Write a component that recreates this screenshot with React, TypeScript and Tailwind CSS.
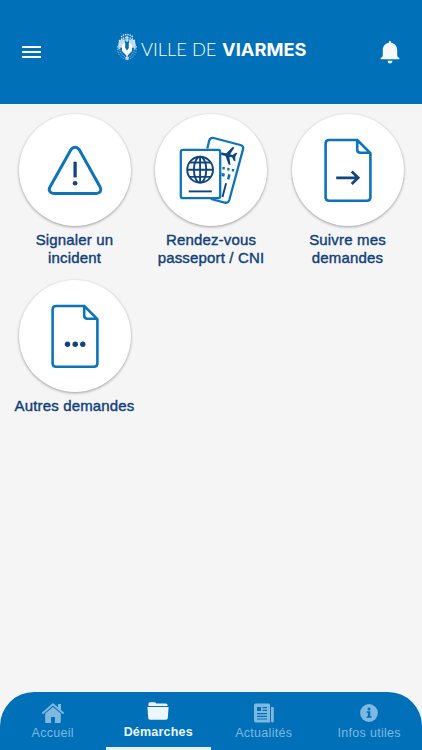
import type { ReactNode } from "react";

const BLUE = "#0e74b9";
const NAVY = "#10457f";

function WarningIcon() {
  return (
    <svg viewBox="0 0 112 112" className="size-full" fill="none">
      <path
        d="M52 35.6 C54 32.6 58.2 32.6 60.2 35.6 L81.1 73.1 C83 76.3 81 79.5 77.3 79.5 H34.8 C31.1 79.5 29.1 76.3 31 73.1 Z"
        stroke={BLUE}
        strokeWidth="3"
      />
      <path d="M56.1 47.7 V63.4" stroke={NAVY} strokeWidth="3.3" />
      <circle cx="56.1" cy="69.3" r="2.3" fill={NAVY} />
    </svg>
  );
}

function PassportIcon() {
  return (
    <svg viewBox="0 0 112 112" className="size-full" fill="none">
      <path
        d="M52.3 34.5 L54.2 26.6 Q55.2 23.2 58.6 24 L85.4 31 Q88.9 32 88 35.4 L74.3 86 Q73.2 89.4 69.8 88.6 L56 85"
        stroke={BLUE}
        strokeWidth="2.3"
      />
      <g transform="translate(73 41.2) rotate(-77)" fill={NAVY}>
        <path d="M-1.2 -6.4 Q0 -8.4 1.2 -6.4 L1.4 -2.2 L9 2.6 V4.6 L1.5 1.8 L1.1 4.4 L4.2 7 V8.6 L0 7.4 L-4.2 8.6 V7 L-1.1 4.4 L-1.5 1.8 L-9 4.6 V2.6 L-1.4 -2.2 Z" />
      </g>
      <g fill={BLUE}>
        <rect x="67.4" y="52.9" width="2.4" height="2.6" />
        <rect x="72.2" y="53.9" width="2.4" height="2.6" />
        <rect x="76.8" y="54.9" width="2.4" height="2.6" />
        <path d="M66.5 58.8 L70 59.8 L69.2 62.7 L66.5 62 Z" />
        <path d="M73.2 60 L75.7 60.7 L74.4 65.8 L71.9 65.1 Z" />
      </g>
      <path d="M71.1 69.2 L67.5 83" stroke={NAVY} strokeWidth="1.9" />
      <rect x="25.8" y="35.8" width="39.4" height="48.4" rx="2.2" fill="white" stroke={BLUE} strokeWidth="2.3" />
      <g stroke={NAVY} strokeWidth="1.9">
        <circle cx="45.1" cy="55.7" r="12.9" />
        <ellipse cx="45.1" cy="55.7" rx="6.2" ry="12.9" />
        <path d="M45.1 42.8 V68.6 M32.2 55.7 H58 M34.6 48.5 H55.6 M34.6 62.9 H55.6" />
        <path d="M33.7 77.4 H56.8" />
      </g>
    </svg>
  );
}

function DocumentIcon({ children }: { children: ReactNode }) {
  return (
    <svg viewBox="0 0 112 112" className="size-full" fill="none">
      <path
        d="M65.2 26 H37.2 Q33.6 26 33.6 29.6 V83.2 Q33.6 86.8 37.2 86.8 H74.8 Q78.4 86.8 78.4 83.2 V39.2 L65.2 26 V35.5 Q65.2 38.8 68.5 38.8 H78.2"
        stroke={BLUE}
        strokeWidth="2.6"
        strokeLinejoin="round"
      />
      {children}
    </svg>
  );
}

function Tile({ label, children }: { label: ReactNode; children: ReactNode }) {
  return (
    <button className="flex flex-col items-center gap-[5px]">
      <span className="block size-28 rounded-full bg-white shadow-[0_1px_3px_rgba(0,0,0,0.36)]">{children}</span>
      <span className="whitespace-nowrap text-center text-[15px] leading-[18px] tracking-[0.16px] text-[#10407a] [-webkit-text-stroke:0.4px_#10407a]">
        {label}
      </span>
    </button>
  );
}

function Crest() {
  return (
    <svg viewBox="0 0 24 30" className="h-[30px] w-6" fill="none" stroke="white">
      <path d="M3 13 Q1 23 12 27 Q23 23 21 13" strokeWidth="1" strokeDasharray="1.4 1.3" opacity=".55" />
      <path d="M5 11 Q3 21 12 25 Q21 21 19 11" strokeWidth="1.3" strokeDasharray="1 1" opacity=".5" />
      <path d="M6 4 Q12 -1 18 4 M4 8 Q12 1 20 8" strokeWidth="1.5" strokeDasharray="1.4 .9" opacity=".85" />
      <path d="M4 8 L8 6 L10 8 V12 L7 15 L3 13 Z M20 8 L16 6 L14 8 V12 L17 15 L21 13 Z" fill="white" stroke="none" opacity=".75" />
      <path d="M2 13 L6 14 L4 17 Z M22 13 L18 14 L20 17 Z" fill="white" stroke="none" opacity=".6" />
      <path
        fillRule="evenodd"
        d="M7 12 L9 10 H15 L17 12 V18 L14 21 L12 23.5 L10 21 L7 18 Z M10.2 10 V15 L12 17.5 L13.8 15 V10 Z"
        fill="white"
        stroke="none"
      />
      <path d="M9 7 H15 M12 3 V9 M12 23 V27 M10 25 H14" strokeWidth="1.2" opacity=".9" />
    </svg>
  );
}

function Tab({ label, active, children }: { label: string; active?: boolean; children: ReactNode }) {
  return (
    <button
      className={
        active
          ? "flex h-full flex-col items-center border-b-[3.5px] border-[#e5f1fa] pt-[8px] text-[#edf6fc]"
          : "flex h-full flex-col items-center pt-[10px] text-[#7fb9e0]"
      }
    >
      <span className="flex h-[22px] items-center">{children}</span>
      <span
        className={
          active
            ? "mt-px whitespace-nowrap text-[12.5px] font-bold leading-[18px] tracking-[0.2px]"
            : "whitespace-nowrap text-[12.5px] leading-[18px] tracking-[0.3px]"
        }
      >
        {label}
      </span>
    </button>
  );
}

export default function App() {
  return (
    <div className="flex h-[750px] w-[422px] flex-col overflow-hidden bg-[#f5f5f5] font-['Liberation_Sans',Arial,sans-serif]">
      <header className="flex h-[104px] shrink-0 items-center justify-between bg-[#0070b9] pl-[22px] pr-[22px]">
        <button aria-label="Menu" className="flex w-[19px] flex-col gap-[3px]">
          <span className="h-[2.3px] bg-white" />
          <span className="h-[2.3px] bg-white" />
          <span className="h-[2.3px] bg-white" />
        </button>
        <div className="flex items-center gap-[2px] pb-2 pl-px">
          <Crest />
          <svg viewBox="0 0 166 24" className="h-6 w-[166px]" fill="white" fontSize="18">
            <text x="0" y="19.7" fontFamily="Lato, sans-serif" fontWeight="300" textLength="75.5" lengthAdjust="spacingAndGlyphs">VILLE DE</text>
            <text x="81" y="19.7" fontFamily="Inter, sans-serif" fontWeight="700" textLength="84.5" lengthAdjust="spacingAndGlyphs">VIARMES</text>
          </svg>
        </div>
        <svg viewBox="0 0 20 24" className="h-6 w-5" fill="#f5f9fc">
          <path d="M9 1.8 Q10 -.4 11 1.8 V2.7 C15.5 3.4 17.2 6.5 17.2 10.5 V15.5 Q17.5 17.4 19 17.7 Q20 18.8 19 19.3 H1 Q0 18.8 1 17.7 Q2.5 17.4 2.8 15.5 V10.5 C2.8 6.5 4.5 3.4 9 2.7 Z" />
          <path d="M7.4 20.7 H12.6 Q12 23.6 10 23.6 Q8 23.6 7.4 20.7 Z" />
        </svg>
      </header>

      <main className="grid flex-1 grid-cols-3 content-start gap-y-[13px] px-[6.25px] pt-[9.5px]">
        <Tile label={<>Signaler un<br />incident</>}><WarningIcon /></Tile>
        <Tile label={<>Rendez-vous<br />passeport / CNI</>}><PassportIcon /></Tile>
        <Tile label={<>Suivre mes<br />demandes</>}>
          <DocumentIcon>
            <path d="M44.2 63.8 H66 M59.7 57.6 L66.2 63.8 L59.7 70" stroke={NAVY} strokeWidth="2.7" />
          </DocumentIcon>
        </Tile>
        <Tile label="Autres demandes">
          <DocumentIcon>
            <g fill={NAVY}>
              <circle cx="48.5" cy="64.3" r="2.7" />
              <circle cx="56.2" cy="64.3" r="2.7" />
              <circle cx="63.8" cy="64.3" r="2.7" />
            </g>
          </DocumentIcon>
        </Tile>
      </main>

      <nav className="grid h-[58.5px] shrink-0 grid-cols-4 rounded-t-[34px] bg-[#0070b9]">
        <Tab label="Accueil">
          <svg viewBox="0 0 22 20" className="h-5 w-[22px]" fill="currentColor">
            <path d="M3.2 10.6 L11 4 L18.8 10.6 V19 Q18.8 20 17.8 20 H13 V14 H9 V20 H4.2 Q3.2 20 3.2 19 Z" />
            <path d="M1 10 L11 1.3 L21 10" fill="none" stroke="currentColor" strokeWidth="1.9" strokeLinecap="round" />
            <path d="M16 1 H19 V8 L16 5.4 Z" />
          </svg>
        </Tab>
        <Tab label="Démarches" active>
          <svg viewBox="0 0 22 18" className="h-[18px] w-[22px]" fill="currentColor">
            <path d="M1.5 4 V1.8 Q1.5 .3 3 .3 H7.6 Q8.7 .3 9.1 1.4 H19 Q20.5 1.5 20.5 3 V4 Z" />
            <path d="M.4 5 H21.6 L20.8 16 Q20.6 17.7 19 17.7 H3 Q1.4 17.7 1.2 16 Z" />
          </svg>
        </Tab>
        <Tab label="Actualités">
          <svg viewBox="0 0 20 20" className="size-5" fill="currentColor">
            <path fillRule="evenodd" d="M1.5 .5 H14.5 Q16 .5 16 2 V19.5 H2 Q0 19.5 0 17.5 V2 Q0 .5 1.5 .5 Z M3 4 V8 H7 V4 Z M8.5 4 V5.3 H13 V4 Z M8.5 6.8 V8 H13 V6.8 Z M3 10 V11.2 H13 V10 Z M3 12.7 V13.9 H13 V12.7 Z M3 15.4 V16.6 H13 V15.4 Z" />
            <path d="M17 4 H18.5 Q19.8 4 19.8 5.2 V18 Q19.5 19.5 18.2 19.5 Q17 19.5 17 18 Z" />
          </svg>
        </Tab>
        <Tab label="Infos utiles">
          <svg viewBox="0 0 18 18" className="size-[18px]" fill="currentColor">
            <circle cx="9" cy="9" r="8.9" />
            <g fill="#0070b9">
              <circle cx="9" cy="5" r="1.5" />
              <path d="M6.7 7.3 H10.3 V12.3 H11.5 V13.8 H6.6 V12.3 H7.9 V8.8 H6.7 Z" />
            </g>
          </svg>
        </Tab>
      </nav>
    </div>
  );
}
